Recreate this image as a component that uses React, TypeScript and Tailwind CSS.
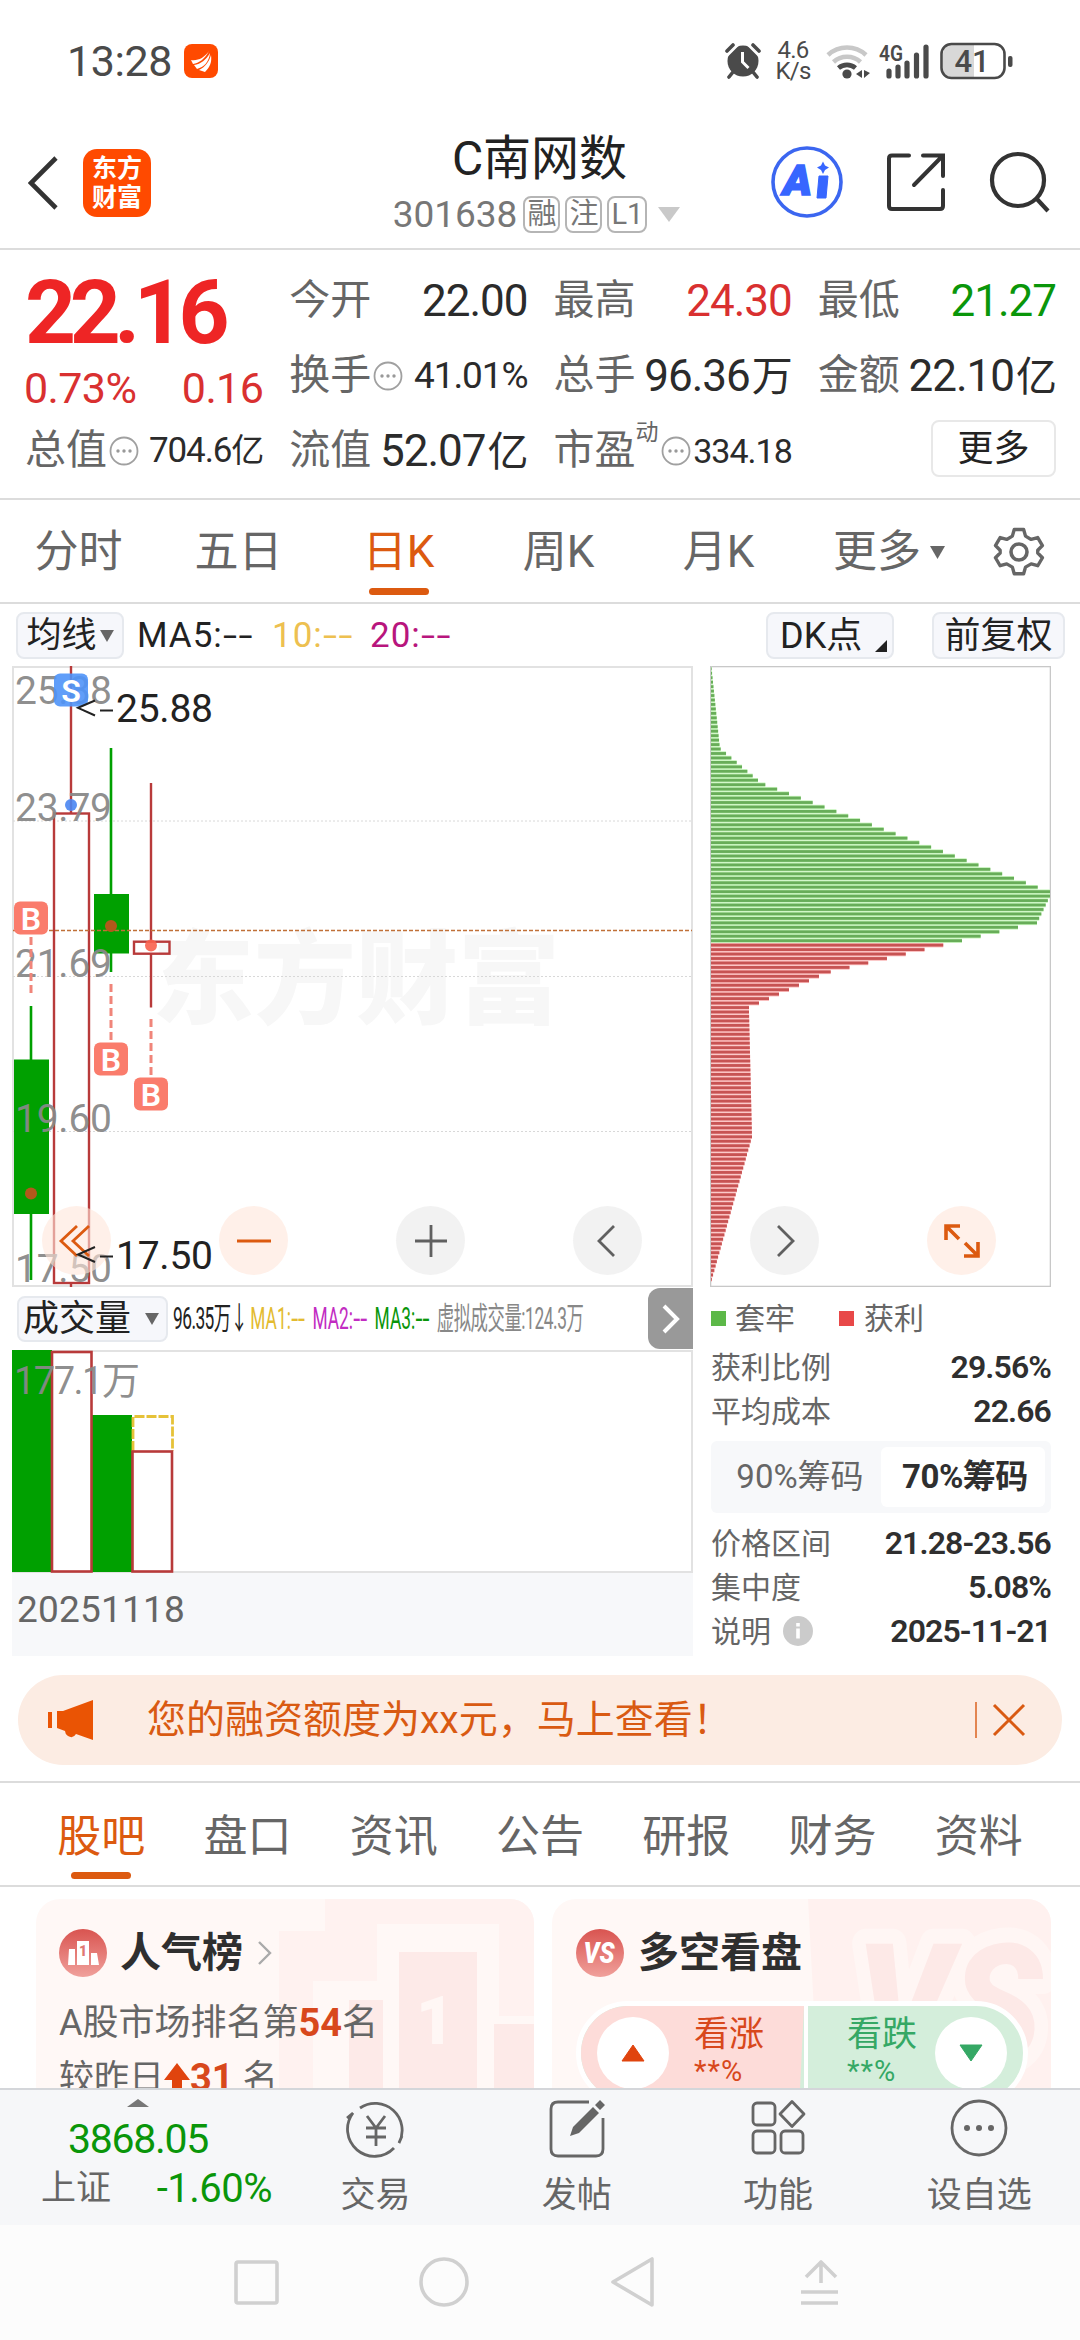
import type { ReactNode } from "react";

const GREEN = "#00a000";
const RED = "#b83a3a";

type QuoteProps = {
  label: string;
  value: string;
  unit?: string;
  tone?: string;
  size?: "lg" | "md" | "sm" | "xs";
  info?: boolean;
  sup?: string;
};

const VALUE_SIZES = {
  lg: "text-[44px] tracking-[-1px]",
  md: "text-[37px] tracking-[-1.1px]",
  sm: "text-[35px] tracking-[-1.1px]",
  xs: "text-[34px] tracking-[-1px]",
};

const InfoDots = () => (
  <svg viewBox="0 0 30 30" className="w-[30px] h-[30px] shrink-0 mx-[2px]">
    <circle cx="15" cy="15" r="13.5" fill="none" stroke="#a0a0a0" strokeWidth="1.8" />
    <circle cx="9" cy="15" r="1.7" fill="#999" />
    <circle cx="15" cy="15" r="1.7" fill="#999" />
    <circle cx="21" cy="15" r="1.7" fill="#999" />
  </svg>
);

// Long double dash shown for a moving average that has no value yet.
const Dashes = () => <span className="inline-block origin-left scale-x-[1.45]">--</span>;

const Quote = ({ label, value, unit, tone = "text-[#2b2b2b]", size = "lg", info, sup }: QuoteProps) => (
  <div className="flex h-[75px] items-center justify-between whitespace-nowrap">
    <div className="flex items-center text-[41px] leading-none text-[#666]">
      {label}
      {sup && <span className="-mt-9 text-[23px]">{sup}</span>}
      {info && <InfoDots />}
    </div>
    <div className={`flex items-baseline leading-none ${VALUE_SIZES[size]} ${tone}`}>
      {value}
      {unit && <span className={size === "lg" ? "ml-[2px] text-[41px]" : "text-[33px]"}>{unit}</span>}
    </div>
  </div>
);

const StatusBar = () => (
  <div className="flex h-[122px] items-center pl-[67px] pr-[66px] text-[#4a4a4a]">
    <span className="text-[43px] tracking-[-0.4px]">13:28</span>
    <svg viewBox="0 0 34 34" className="ml-3 w-[34px] h-[34px]">
      <rect width="34" height="34" rx="8" fill="#ff4a00" />
      <path d="M7 16c7 1 13-2 18-9C21 15 15 19 9 20zM10 21c7-1 12-5 16-12-1 9-6 14-13 16zM15 26c6-3 10-8 12-15 1 7-1 12-6 17z" fill="#fff" />
    </svg>
    <div className="ml-auto flex items-center">
      <svg viewBox="0 0 36 36" className="w-[36px] h-[36px]">
        <circle cx="18" cy="18" r="15.500" fill="#4a4a4a" />
        <path d="M2 8l6-6M34 8l-6-6M8 29l-4 5M28 29l4 5" stroke="#4a4a4a" strokeWidth="3.600" strokeLinecap="round" />
        <path d="M2 13l11-11M34 13L23 2" stroke="#fff" strokeWidth="2" />
        <path d="M17.500 9v10l6 6" stroke="#fff" strokeWidth="3" fill="none" />
      </svg>
      <div className="ml-[14px] flex w-[36px] flex-col items-center text-[24px] leading-[21px] tracking-[-0.8px]">
        <span>4.6</span>
        <span>K/s</span>
      </div>
      <svg viewBox="0 0 46 38" className="ml-[14px] w-[46px] h-[38px]" fill="none">
        <path d="M3 13a28 28 0 0 1 38 0" stroke="#c8c8c8" strokeWidth="4.600" />
        <path d="M8.500 20a20 20 0 0 1 27 0" stroke="#c8c8c8" strokeWidth="4.600" />
        <path d="M13.500 26a13 13 0 0 1 17 0" stroke="#4a4a4a" strokeWidth="4.600" />
        <circle cx="22" cy="32" r="4.600" fill="#4a4a4a" />
        <path d="M37 28v8l-6-4zM39 28v8l6-5z" fill="#4a4a4a" />
      </svg>
      <svg viewBox="0 0 52 38" className="ml-[7px] w-[52px] h-[38px]">
        <text x="1" y="19" fontSize="22" fontWeight="600" fill="#4a4a4a" textLength="24" lengthAdjust="spacingAndGlyphs">4G</text>
        <g stroke="#4a4a4a" strokeWidth="5.200" strokeLinecap="round">
          <path d="M11 29v5M20 25v9M29 21v13M38.500 13v21M48 5v29" />
        </g>
      </svg>
      <svg viewBox="0 0 74 38" className="ml-[10px] w-[74px] h-[38px]">
        <path d="M12 3h22v32H12q-9 0-9-9V12q0-9 9-9z" fill="#d8d8d8" />
        <rect x="1.500" y="2" width="63" height="34" rx="10" fill="none" stroke="#4a4a4a" strokeWidth="2.600" />
        <rect x="68" y="14" width="4.500" height="11" rx="2" fill="#4a4a4a" />
        <text x="32" y="30" fontSize="31" fontWeight="500" textAnchor="middle" fill="#4a4a4a">41</text>
      </svg>
    </div>
  </div>
);

const Tag = ({ children }: { children: ReactNode }) => (
  <span className="flex h-[37px] min-w-[36px] items-center justify-center rounded-[8px] border-2 border-[#b5b5b5] px-[2px] text-[29px] leading-none">
    {children}
  </span>
);

const Header = () => (
  <div className="flex h-[128px] items-center border-b-2 border-[#dcdcdc] pl-[28px] pr-[29px]">
    <div className="-mt-[5px] flex w-[320px] items-center">
      <svg viewBox="0 0 30 54" className="w-[30px] h-[54px]" fill="none">
        <path d="M28 2L3 27l25 25" stroke="#333" strokeWidth="4.600" />
      </svg>
      <div className="ml-[25px] flex h-[68px] w-[68px] flex-col items-center justify-center rounded-[14px] bg-[#ff4a00] text-[25px] font-bold leading-[29px] text-white">
        <span>东方</span>
        <span>财富</span>
      </div>
    </div>
    <div className="flex flex-1 flex-col items-center">
      <div className="text-[48px] leading-[50px] text-[#222]">C南网数</div>
      <div className="ml-[-6px] mt-[9px] flex items-center gap-[5px] text-[37px] leading-[44px] text-[#777]">
        <span className="mr-[1px]">301638</span>
        <Tag>融</Tag>
        <Tag>注</Tag>
        <Tag>L1</Tag>
        <svg viewBox="0 0 22 15" className="ml-[6px] w-[22px] h-[15px]">
          <path d="M0 0h22L11 15z" fill="#c9c9c9" />
        </svg>
      </div>
    </div>
    <div className="-mt-[6px] flex w-[320px] items-center justify-end">
      <svg viewBox="0 0 74 74" className="w-[74px] h-[74px]">
        <circle cx="37" cy="37" r="34" fill="none" stroke="#3b66f0" strokeWidth="3.600" />
        <text x="13" y="50" fontSize="42" fontWeight="900" fontStyle="italic" fill="#3766ff" stroke="#3766ff" strokeWidth="1.600" textLength="29" lengthAdjust="spacingAndGlyphs">A</text>
        <path d="M49 31h9l-2 22h-9z" fill="#3766ff" stroke="#3766ff" strokeLinejoin="round" />
        <path d="M53 16.500l2 4 4 2-4 2.500-2 4-2-4-4-2.500 4-2z" fill="#3766ff" />
      </svg>
      <svg viewBox="0 0 60 60" className="ml-[42px] w-[60px] h-[60px]" fill="none" stroke="#333" strokeWidth="4" strokeLinecap="round">
        <path d="M23 3.500H6q-3 0-3 3V54q0 3 3 3h48q3 0 3-3V38" />
        <path d="M37 3.500h20V24M56 4.500L28 33" />
      </svg>
      <svg viewBox="0 0 62 62" className="ml-[43px] w-[62px] h-[62px]" fill="none" stroke="#333" strokeWidth="4.200">
        <circle cx="29" cy="29" r="26" />
        <path d="M47 47l12 13" />
      </svg>
    </div>
  </div>
);

const Quotes = () => (
  <div className="h-[250px] border-b-2 border-[#dcdcdc] pl-[25px] pr-[24px] pt-[13px]">
    <div className="grid grid-cols-4 gap-x-[26px]">
      <div className="h-[150px]">
        <div className="mt-[4px] h-[92px] text-[89px] font-bold leading-[92px] tracking-[-6.400px] text-[#ee2525]">22.16</div>
        <div className="mt-[3px] flex justify-between text-[43px] leading-[52px] tracking-[-0.600px] text-[#d93030]">
          <span className="-ml-[1px]">0.73%</span>
          <span>0.16</span>
        </div>
      </div>
      <div>
        <Quote label="今开" value="22.00" />
        <Quote label="换手" info value="41.01%" size="md" />
      </div>
      <div>
        <Quote label="最高" value="24.30" tone="text-[#d93030]" />
        <Quote label="总手" value="96.36" unit="万" />
      </div>
      <div>
        <Quote label="最低" value="21.27" tone="text-[#0a960a]" />
        <Quote label="金额" value="22.10" unit="亿" />
      </div>
      <Quote label="总值" info value="704.6" unit="亿" size="sm" />
      <Quote label="流值" value="52.07" unit="亿" />
      <Quote label="市盈" sup="动" info value="334.18" size="xs" />
      <div className="-mt-[2px] flex h-[75px] items-center justify-end">
        <button className="h-[57px] w-[125px] rounded-[8px] border-2 border-[#e8e8e8] text-[36px] leading-none text-[#222]">更多</button>
      </div>
    </div>
  </div>
);

const PeriodTabs = () => (
  <div className="flex h-[104px] items-center border-b-2 border-[#dcdcdc] text-[44px] text-[#666]">
    {["分时", "五日", "日K", "周K", "月K"].map((t) => (
      <div
        key={t}
        className={`relative flex h-full w-[160px] items-center justify-center pt-[2px] pr-[3px] ${t === "日K" ? "text-[#dc5a10]" : ""}`}
      >
        {t}
        {t === "日K" && <span className="absolute bottom-[7px] h-[7px] w-[60px] rounded-full bg-[#dc5a10]" />}
      </div>
    ))}
    <div className="flex w-[178px] items-center justify-center gap-[9px] pt-[2px]">
      更多
      <svg viewBox="0 0 15 13" className="w-[15px] h-[13px]">
        <path d="M0 0h15L7.500 13z" fill="#666" />
      </svg>
    </div>
    <svg viewBox="0 0 52 52" className="ml-[15px] mt-[2px] w-[52px] h-[52px]" fill="none" stroke="#666" strokeWidth="3.600" strokeLinejoin="round">
      <path d="M21 2.500h10l2 7 6 3.500 7-2 5 8.500-5 5v3l5 5-5 8.500-7-2-6 3.500-2 7H21l-2-7-6-3.500-7 2-5-8.500 5-5v-3l-5-5 5-8.500 7 2 6-3.500z" transform="translate(1.500 1.200) scale(.94)" />
      <circle cx="26" cy="26" r="8" />
    </svg>
  </div>
);

const IndicatorBar = () => (
  <div className="flex h-[62px] items-center pl-[16px] pr-[15px] pt-[1px] text-[35px] leading-none text-[#222]">
    <div className="flex h-[47px] w-[108px] items-center justify-center gap-[3px] rounded-[8px] border-2 border-[#e6e9ee] bg-[#f6f7fb]">
      均线
      <svg viewBox="0 0 15 13" className="w-[14px] h-[12px]">
        <path d="M0 0h15L7.500 13z" fill="#666" />
      </svg>
    </div>
    <span className="ml-[13px] w-[135px] tracking-[1px]">MA5:<Dashes /></span>
    <span className="w-[98px] tracking-[1px] text-[#edc050]">10:<Dashes /></span>
    <span className="tracking-[1px] text-[#b8157d]">20:<Dashes /></span>
    <div className="relative ml-auto flex h-[47px] w-[128px] items-center rounded-[8px] border-2 border-[#e6e9ee] bg-[#f6f7fb] pl-[12px] text-[36px]">
      DK点
      <svg viewBox="0 0 12 12" className="absolute bottom-[5px] right-[5px] w-[12px] h-[12px]">
        <path d="M12 0v12H0z" fill="#222" />
      </svg>
    </div>
    <div className="ml-[38px] flex h-[47px] w-[133px] items-center justify-center rounded-[8px] border-2 border-[#e6e9ee] bg-[#f6f7fb] text-[36px]">前复权</div>
  </div>
);

const Badge = ({ x, y, letter, color }: { x: number; y: number; letter: string; color: string }) => (
  <g>
    <rect x={x} y={y} width="34" height="33" rx="6" fill={color} />
    <text x={x + 17} y={y + 28} fontSize="32" fontWeight="600" textAnchor="middle" fill="#fff">
      {letter}
    </text>
  </g>
);

// Coordinates below are in page pixels, the viewBox starts at the panel's corner.
const KLine = () => (
  <svg viewBox="12 667 681 621" className="block w-[681px] h-[621px]">
    <rect x="13" y="668" width="679" height="619" fill="#fff" stroke="#e2e2e2" strokeWidth="2" />
    <text x="152" y="1017" fontSize="102" fontWeight="900" fill="#f7f7f7" textLength="408">东方财富</text>
    <path d="M13 822H692M13 977.500H692M13 1132.500H692" stroke="#d8d8d8" strokeWidth="1" strokeDasharray="2 2" />

    <g stroke={GREEN} strokeWidth="2.600">
      <path d="M31 1007V1281M111 749V973" />
    </g>
    <rect x="14" y="1060.500" width="35" height="154.500" fill={GREEN} />
    <rect x="94" y="895" width="35" height="59.500" fill={GREEN} />
    <g stroke={RED} strokeWidth="2.400" fill="none">
      <path d="M71 667V814M71 1285V1288M151 784V942M151 955V1008.500" />
      <rect x="54" y="814.500" width="35" height="469.500" />
      <rect x="134" y="942.700" width="35.500" height="12" />
    </g>

    <g fontSize="39" fill="#888">
      {[
        ["25.88", 704.5],
        ["23.79", 822],
        ["21.69", 977.5],
        ["19.60", 1132.5],
        ["17.50", 1282.5],
      ].map(([label, y]) => (
        <text key={label} x="15" y={y} textLength="97" fillOpacity="0.95">{label}</text>
      ))}
    </g>

    <path d="M13 931.500H692" stroke="#c07038" strokeWidth="1.400" strokeDasharray="4 2" />
    <g stroke="#f0857a" strokeWidth="3" strokeDasharray="8 4">
      <path d="M31 938V994M111 985V1041M151 1020V1076" />
    </g>
    <circle cx="31" cy="1194.500" r="6" fill="#b2581b" />
    <circle cx="111" cy="927" r="6" fill="#b2581b" />
    <circle cx="151" cy="946.500" r="6" fill="#f9604c" fillOpacity="0.9" />
    <circle cx="71" cy="806" r="6" fill="#4a86f2" fillOpacity="0.9" />
    <Badge x={54} y={674.5} letter="S" color="#4f94f8e6" />
    <Badge x={14} y={902.5} letter="B" color="#fa7c6c" />
    <Badge x={94} y={1043.5} letter="B" color="#fa7c6c" />
    <Badge x={134} y={1078.5} letter="B" color="#fa7c6c" />
  </svg>
);

const PriceMarks = () => (
  <svg viewBox="12 667 681 621" className="pointer-events-none absolute left-[12px] top-0 w-[681px] h-[621px]">
    <g fill="none" stroke="#222" strokeWidth="2">
      <path d="M95 701.500L78 708.800L95 716.500M100 711.500H113" />
      <path d="M95 1248L78 1255.500L95 1263M100 1257.500H113" />
    </g>
    <g fontSize="39" fill="#222">
      <text x="116" y="723" textLength="97">25.88</text>
      <text x="116" y="1269.500" textLength="97">17.50</text>
    </g>
  </svg>
);

// Bar lengths are linear between these [index, length] stops.
const CHIP_STOPS = [
  [0, 0.6], [17, 8.5], [18, 9.7], [25, 47], [26, 54.3], [49, 326.7], [50, 339], [51, 339],
  [57, 326], [58, 307], [61, 251], [68, 119.7], [69, 108], [75, 48], [76, 38], [77, 38], [105, 41], [137, 0.8],
];

const chipLength = (i: number) => {
  const n = CHIP_STOPS.findIndex(([index]) => index >= i);
  if (n <= 0) return CHIP_STOPS[0][1];
  const [i0, v0] = CHIP_STOPS[n - 1];
  const [i1, v1] = CHIP_STOPS[n];
  return v0 + ((v1 - v0) * (i - i0)) / (i1 - i0);
};

const ChipChart = () => (
  <svg viewBox="710 667 341 621" className="block w-[341px] h-[621px]">
    <rect x="710.500" y="667.500" width="340" height="620" fill="#fff" stroke="#c8c8c8" strokeWidth="1.600" />
    {Array.from({ length: 138 }, (_, i) => {
      const y = 669.8 + i * 4.457;
      const up = i < 62;
      const len = chipLength(i);
      return (
        <g key={i}>
          <rect x="711" y={y - 2.2} width={len} height="4.457" fill={up ? "#c6f5bb" : "#fab9b9"} />
          <rect x="711" y={y - 1.4} width={len} height="2.8" fill={up ? "#68ad59" : "#c75353"} />
        </g>
      );
    })}
  </svg>
);

const Control = ({ warm, children }: { warm?: boolean; children: ReactNode }) => (
  <button className={`flex h-[69px] w-[69px] items-center justify-center rounded-full ${warm ? "bg-[#ffe6da]/60 text-[#dc5a10]" : "bg-[#ededed]/70 text-[#606060]"}`}>
    <svg viewBox="0 0 40 40" className="w-[40px] h-[40px]" fill="none" stroke="currentColor" strokeWidth="2.800">
      {children}
    </svg>
  </button>
);

const ChartArea = () => (
  <div className="relative flex h-[621px] gap-[17px] pl-[12px]">
    <KLine />
    <ChipChart />
    <div className="absolute bottom-[12px] left-[42px] flex gap-[108px]">
      <Control warm>
        <path d="M20 5L4 20l16 15M32 5L16 20l16 15" />
      </Control>
      <Control warm>
        <path d="M3 20h34" />
      </Control>
      <Control>
        <path d="M4 20h32M20 4v32" />
      </Control>
      <Control>
        <path d="M26 5L11 20l15 15" />
      </Control>
      <Control>
        <path d="M13 5l15 15-15 15" />
      </Control>
      <Control warm>
        <path d="M4 19V5h14M5 6l12 12M36 21v14H22M35 34L23 22" strokeWidth="3.600" />
      </Control>
    </div>
    <PriceMarks />
  </div>
);

const VolumePanel = () => (
  <div className="w-[681px] shrink-0">
    <div className="flex h-[63px] items-center pl-[5px]">
      <div className="flex h-[46px] w-[151px] shrink-0 items-center rounded-[8px] border-2 border-[#e6e9ee] bg-[#f6f7fb] pl-[4px] text-[36px] leading-none text-[#222]">
        成交量
        <svg viewBox="0 0 15 13" className="ml-[14px] w-[14px] h-[12px]">
          <path d="M0 0h15L7.500 13z" fill="#666" />
        </svg>
      </div>
      <div className="flex h-full w-[480px] shrink-0 items-center">
        <div className="ml-[5px] flex origin-left scale-x-[0.56] items-center whitespace-nowrap text-[31px] leading-none">
          <span className="w-[138px] shrink-0 tracking-[-1px] text-[#222]">96.35万↓</span>
          <span className="w-[111px] shrink-0 text-[#e3bb30]">MA1:<Dashes /></span>
          <span className="w-[111px] shrink-0 text-[#c22cc2]">MA2:<Dashes /></span>
          <span className="w-[111px] shrink-0 text-[#0a960a]">MA3:<Dashes /></span>
          <span className="tracking-[-0.800px] text-[#888]">虚拟成交量:124.3万</span>
        </div>
      </div>
      <button className="flex h-[61px] w-[45px] shrink-0 items-center justify-center rounded-l-[12px] bg-[#999]">
        <svg viewBox="0 0 18 30" className="w-[18px] h-[30px]" fill="none">
          <path d="M2 2l13 13L2 28" stroke="#fff" strokeWidth="4" />
        </svg>
      </button>
    </div>
    <svg viewBox="12 1351 681 223" className="block w-[681px] h-[223px]">
      <rect x="13" y="1352" width="679" height="221" fill="#fff" stroke="#e2e2e2" strokeWidth="2" />
      <rect x="12" y="1351" width="40" height="222" fill={GREEN} />
      <rect x="92" y="1416" width="40" height="157" fill={GREEN} />
      <path d="M133 1452V1417.500H172.500V1452" fill="none" stroke="#e6c238" strokeWidth="2.800" strokeDasharray="10 2" />
      <rect x="52" y="1353" width="39.500" height="219.500" fill="#fff" stroke={RED} strokeWidth="2.600" />
      <rect x="132.500" y="1452.500" width="39.500" height="120" fill="#fff" stroke={RED} strokeWidth="2.600" />
      <text x="14" y="1395" fontSize="38" fill="#888" fillOpacity="0.95" textLength="126">177.1万</text>
    </svg>
    <div className="h-[83px] bg-[#f7f8fa] pl-[5px] pt-[15px] text-[37px] leading-[44px] tracking-[0.200px] text-[#666]">20251118</div>
  </div>
);

const Stat = ({ label, value, info }: { label: string; value: string; info?: boolean }) => (
  <div className="flex h-[44px] items-center justify-between text-[30px] text-[#666]">
    <span className="flex items-center gap-[12px]">
      {label}
      {info && (
        <svg viewBox="0 0 30 30" className="w-[30px] h-[30px]">
          <circle cx="15" cy="15" r="15" fill="#cbcbcb" />
          <path d="M15 12.500v10M15 7v3.500" stroke="#fff" strokeWidth="3.600" />
        </svg>
      )}
    </span>
    <span className="text-[32px] font-semibold tracking-[-0.900px] text-[#2f2f2f]">{value}</span>
  </div>
);

const ChipStats = () => (
  <div className="flex w-[340px] flex-col">
    <div className="flex h-[58px] items-center pt-[5px] text-[30px] text-[#666]">
      <span className="h-[15px] w-[15px] bg-[#5cb848]" />
      <span className="ml-[9px]">套牢</span>
      <span className="ml-[44px] h-[15px] w-[15px] bg-[#e84848]" />
      <span className="ml-[10px]">获利</span>
    </div>
    <Stat label="获利比例" value="29.56%" />
    <Stat label="平均成本" value="22.66" />
    <div className="my-[8px] flex h-[72px] items-center rounded-[6px] bg-[#f7f8fa] px-[6px] text-[33px]">
      <span className="w-[164px] pl-[2px] text-center text-[#666]">90%筹码</span>
      <span className="flex h-[60px] w-[164px] items-center justify-center rounded-[6px] bg-white pl-[4px] font-bold tracking-[-0.500px] text-[#2f2f2f]">70%筹码</span>
    </div>
    <Stat label="价格区间" value="21.28-23.56" />
    <Stat label="集中度" value="5.08%" />
    <Stat label="说明" value="2025-11-21" info />
  </div>
);

const Banner = () => (
  <div className="mx-[18px] mt-[19px] flex h-[90px] shrink-0 items-center rounded-full bg-[#fcece3] pl-[30px] pr-[36px] text-[#d95a12]">
    <svg viewBox="0 0 46 40" className="w-[46px] h-[40px]" fill="#ea5404">
      <rect x="0" y="12" width="4" height="16" />
      <path d="M9 11h6L45 0v40L28 34q-3 5-8 2-3-2-3-5L9 28z" />
    </svg>
    <span className="ml-[53px] text-[39px] leading-none">您的融资额度为xx元，马上查看！</span>
    <svg viewBox="0 0 52 38" className="ml-auto w-[52px] h-[38px]" fill="none" stroke="#d95a12">
      <path d="M2 1v36" strokeWidth="1.400" />
      <path d="M20 4l30 30M50 4L20 34" strokeWidth="3" />
    </svg>
  </div>
);

const InfoTabs = () => (
  <div className="mt-[16px] flex h-[106px] shrink-0 border-y-2 border-[#dcdcdc] px-[28px] text-[44px] text-[#666]">
    {["股吧", "盘口", "资讯", "公告", "研报", "财务", "资料"].map((t, i) => (
      <div key={t} className={`relative flex flex-1 items-center justify-center pt-[5px] ${i === 0 ? "text-[#dc5a10]" : ""}`}>
        {t}
        {i === 0 && <span className="absolute bottom-[6px] h-[7px] w-[60px] rounded-full bg-[#dc5a10]" />}
      </div>
    ))}
  </div>
);

const PopularCard = () => (
  <div className="relative h-[300px] w-[498px] overflow-hidden rounded-[24px] bg-[#fff8f6] pl-[23px] pt-[30px]">
    <svg viewBox="0 0 498 300" className="absolute left-0 top-0 w-[498px] h-[300px]">
      <path d="M289 0h209v300H243V32h46z" fill="#fff2f0" />
      <path d="M277 300V82h64V25h122v92h35v183z" fill="#fff8f6" />
      <path d="M313 300V101h34v199zM363 300V53h78v247zM458 300V125h40v175z" fill="#fdeae8" />
      <text x="380" y="145" fontSize="66" fontWeight="900" fill="#fff7f5">1</text>
    </svg>
    <div className="relative flex h-[48px] items-center">
      <svg viewBox="0 0 48 48" className="w-[48px] h-[48px]">
        <defs>
          <linearGradient id="badge" x1="0" y1="0" x2="0" y2="1">
            <stop offset="0" stopColor="#d95450" />
            <stop offset="1" stopColor="#f0a09b" />
          </linearGradient>
        </defs>
        <circle cx="24" cy="24" r="24" fill="url(#badge)" />
        <path d="M10 20h6v16H9zM18 12h12v24H18zM32 24h6l2 12h-8z" fill="#fff" />
        <text x="24" y="27" fontSize="14" fontWeight="900" textAnchor="middle" fill="#e07873">1</text>
      </svg>
      <span className="ml-[13px] text-[41px] font-bold leading-none text-[#2f2f2f]">人气榜</span>
      <svg viewBox="0 0 14 24" className="ml-[15px] w-[14px] h-[24px]" fill="none">
        <path d="M1 1l11 11L1 23" stroke="#aaa" strokeWidth="2.400" />
      </svg>
    </div>
    <div className="relative mt-[24px] flex h-[44px] items-center text-[36px] leading-none text-[#666]">
      A股市场排名第<b className="text-[38px] text-[#d8481c]">54</b>名
    </div>
    <div className="relative mt-[11px] flex h-[44px] items-center text-[35px] leading-none text-[#666]">
      较昨日
      <svg viewBox="0 0 26 30" className="w-[26px] h-[30px]">
        <path d="M13 0l13 17h-8v13H8V17H0z" fill="#e0440e" />
      </svg>
      <b className="mr-[9px] text-[38px] text-[#d8481c]">31</b>名
    </div>
  </div>
);

const VersusCard = () => (
  <div className="relative h-[300px] w-[499px] overflow-hidden rounded-[24px] bg-[#fff8f6] pl-[24px] pt-[30px]">
    <svg viewBox="0 0 499 300" className="absolute left-0 top-0 w-[499px] h-[300px]">
      <path d="M256 0h243v300H272z" fill="#fff1ef" />
      <text x="304" y="162" fontSize="165" fontStyle="italic" fontWeight="900" fill="#fde9e7" stroke="#fff6f4" strokeWidth="30" strokeLinejoin="round" paintOrder="stroke" textLength="186" lengthAdjust="spacingAndGlyphs">VS</text>
    </svg>
    <div className="relative flex h-[48px] items-center">
      <svg viewBox="0 0 48 48" className="w-[48px] h-[48px]">
        <circle cx="24" cy="24" r="24" fill="url(#badge)" />
        <text x="23" y="34" fontSize="30" fontStyle="italic" fontWeight="900" textAnchor="middle" fill="#fff" textLength="31" lengthAdjust="spacingAndGlyphs">VS</text>
      </svg>
      <span className="ml-[14px] text-[41px] font-bold leading-none text-[#2f2f2f]">多空看盘</span>
    </div>
    <div className="relative mt-[24px] flex h-[104px] w-[452px] overflow-hidden rounded-full border-[5px] border-white bg-[#d4eedb]">
      <div className="flex w-[223px] items-center gap-[25px] bg-[#fddcd9] pl-[16px] [clip-path:polygon(0_0,100%_0,98%_100%,0_100%)]">
        <span className="flex h-[72px] w-[72px] items-center justify-center rounded-full bg-white">
          <svg viewBox="0 0 24 18" className="w-[24px] h-[18px]">
            <path d="M12 1l11 16H1z" fill="#e0440e" stroke="#e0440e" strokeLinejoin="round" />
          </svg>
        </span>
        <div className="flex flex-col pb-[3px] text-[35px] leading-[38px] text-[#d8481c]">
          <span>看涨</span>
          <span className="text-[29px] leading-[34px] tracking-[1px]">**%</span>
        </div>
      </div>
      <div className="flex flex-1 items-center justify-end gap-[18px] border-l-[4px] border-white pr-[16px]">
        <div className="flex flex-col pb-[3px] text-[35px] leading-[38px] text-[#35a865]">
          <span>看跌</span>
          <span className="text-[29px] leading-[34px] tracking-[1px]">**%</span>
        </div>
        <span className="flex h-[72px] w-[72px] items-center justify-center rounded-full bg-white">
          <svg viewBox="0 0 24 18" className="w-[24px] h-[18px]">
            <path d="M12 17L1 1h22z" fill="#35a865" stroke="#35a865" strokeLinejoin="round" />
          </svg>
        </span>
      </div>
    </div>
  </div>
);

const Action = ({ label, children }: { label: string; children: ReactNode }) => (
  <div className="flex flex-1 flex-col items-center pt-[8px] text-[35px] leading-[44px]">
    <svg viewBox="0 0 64 60" className="mb-[16px] w-[64px] h-[60px]" fill="none" stroke="#666" strokeWidth="2.800">
      {children}
    </svg>
    {label}
  </div>
);

const BottomBar = () => (
  <div className="flex h-[137px] shrink-0 border-t-2 border-[#d4d6da] bg-[#f6f7f9] text-[#666]">
    <div className="relative flex w-[275px] flex-col pl-[41px] pt-[24px]">
      <svg viewBox="0 0 22 8" className="absolute left-[127px] top-[9px] w-[22px] h-[8px]">
        <path d="M0 8L11 0l11 8z" fill="#777" />
      </svg>
      <span className="pl-[27px] text-[41px] leading-[50px] tracking-[-1.300px] text-[#0a960a]">3868.05</span>
      <div className="flex justify-between pr-[3px] text-[35px] leading-[50px]">
        上证
        <span className="text-[40px] tracking-[-0.500px] text-[#0a960a]">-1.60%</span>
      </div>
    </div>
    <Action label="交易">
      <path d="M16 10a27 27 0 0 1 39 35l3-7M16 10M50 50A27 27 0 0 1 9 15l-6 5" />
      <path d="M23 18l9 12 9-12M22 30h20M22 39h20M32 30v18" />
    </Action>
    <Action label="发帖">
      <path d="M44 4H13q-7 0-7 7v40q0 7 7 7h38q7 0 7-7V20" />
      <path d="M25 38l3-9 20-20 6 6-20 20zM50 7l5-5 5 5-5 5z" fill="#666" stroke="none" />
    </Action>
    <Action label="功能">
      <rect x="7" y="5" width="22" height="22" rx="4" />
      <path d="M46 3.500L58 16 46 28.500 34 16z" strokeLinejoin="round" />
      <rect x="7" y="33" width="22" height="22" rx="4" />
      <rect x="35" y="33" width="22" height="22" rx="4" />
    </Action>
    <Action label="设自选">
      <circle cx="32" cy="30" r="27" />
      <g fill="#666" stroke="none">
        <circle cx="20" cy="30" r="3" />
        <circle cx="32" cy="30" r="3" />
        <circle cx="44" cy="30" r="3" />
      </g>
    </Action>
  </div>
);

const SystemNav = () => (
  <div className="flex h-[115px] shrink-0 justify-center bg-[#fcfcfc] pr-[24px]">
    <svg viewBox="0 0 620 115" className="w-[620px] h-[115px]" fill="none" stroke="#d0d0d0" strokeWidth="3.600" strokeLinejoin="round">
      <rect x="18" y="37" width="41" height="41" rx="2" />
      <circle cx="226" cy="57" r="23" />
      <path d="M434 34v46L395 57z" />
      <path d="M603 58V37M588 52l15-15 15 15M583 67h40M583 78h40" />
    </svg>
  </div>
);

export default function App() {
  return (
    <div className="flex h-[2340px] w-[1080px] flex-col overflow-hidden bg-white font-[Roboto,'Noto_Sans_CJK_SC',sans-serif]">
      <StatusBar />
      <Header />
      <Quotes />
      <PeriodTabs />
      <IndicatorBar />
      <ChartArea />
      <div className="flex h-[369px] shrink-0 gap-[18px] pl-[12px]">
        <VolumePanel />
        <ChipStats />
      </div>
      <Banner />
      <InfoTabs />
      <div className="flex min-h-0 flex-1 items-start gap-[18px] overflow-hidden pl-[36px] pt-[12px]">
        <PopularCard />
        <VersusCard />
      </div>
      <BottomBar />
      <SystemNav />
    </div>
  );
}
